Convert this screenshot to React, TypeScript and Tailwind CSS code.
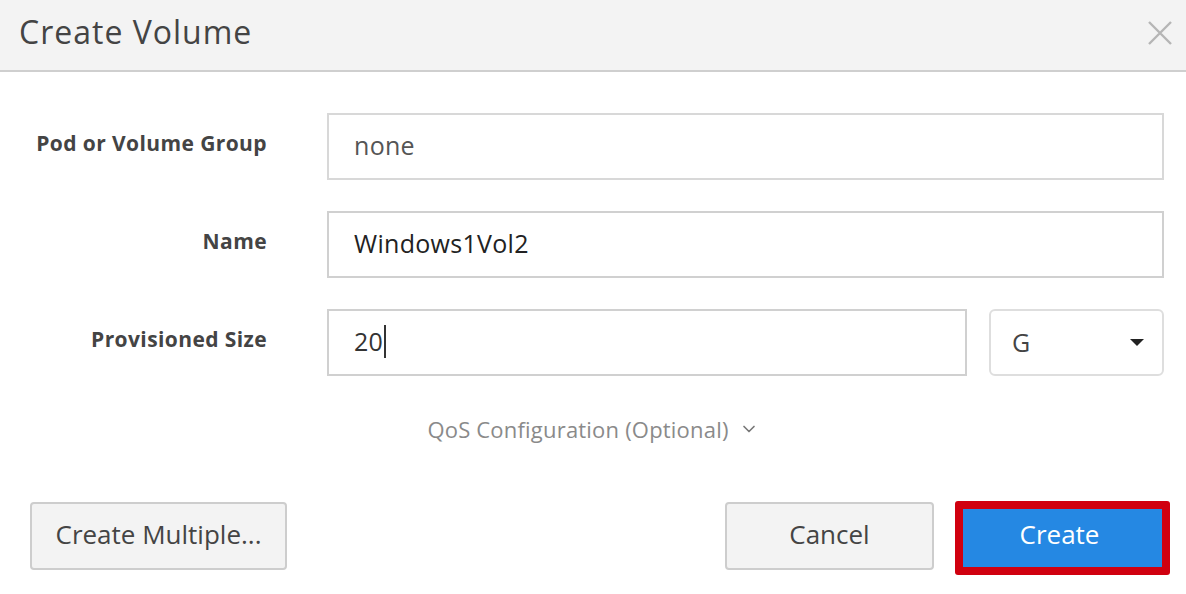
import { ChevronDown } from "lucide-react";

const font = { fontFamily: "'Open Sans', Lato, sans-serif" };

function Field({ label, children }: { label: string; children: React.ReactNode }) {
  return (
    <div className="flex items-center">
      <div className="w-[267px] shrink-0 pb-[6px] text-right text-[21px] leading-none font-bold tracking-[0.4px] text-[#444]">
        {label}
      </div>
      <div className="ml-[60px] flex flex-1 gap-[22px]">{children}</div>
    </div>
  );
}

export default function App() {
  return (
    <div className="flex h-[594px] w-[1186px] flex-col bg-white" style={font}>
      {/* Header */}
      <div className="flex h-[72px] shrink-0 items-center justify-between border-b-2 border-[#cfcfcf] bg-[#f3f3f3] pl-[19px] pr-[13px]">
        <h1 className="mb-[6px] text-[32px] leading-none tracking-[1px] text-[#444]">Create Volume</h1>
        <svg width="26" height="26" viewBox="0 0 26 26" className="mb-[4px]">
          <path d="M2 2 L24 24 M24 2 L2 24" stroke="#b5b5b5" strokeWidth="2.4" />
        </svg>
      </div>

      {/* Body */}
      <div className="flex flex-col gap-[31px] pr-[22px] pt-[41px]">
        <Field label="Pod or Volume Group">
          <div className="flex h-[67px] flex-1 items-center border-2 border-[#d8d8d8] pb-[2px] pl-[25px] text-[25px] tracking-[0.3px] text-[#555]">
            none
          </div>
        </Field>
        <Field label="Name">
          <div className="flex h-[67px] flex-1 items-center border-2 border-[#d0d0d0] pb-[2px] pl-[25px] text-[25px] tracking-[0.3px] text-[#222]">
            Windows1Vol2
          </div>
        </Field>
        <Field label="Provisioned Size">
          <div className="flex h-[67px] flex-1 items-center border-2 border-[#d0d0d0] pb-[2px] pl-[25px] text-[25px] tracking-[0.3px] text-[#333]">
            20
            <span className="ml-[1px] h-[33px] w-[2px] bg-[#333]" />
          </div>
          <div className="flex h-[67px] w-[175px] shrink-0 items-center justify-between rounded-[6px] border-2 border-[#dedede] pl-[21px] pr-[18px] text-[25px] text-[#444]">
            G
            <svg width="14" height="8" viewBox="0 0 14 8">
              <path d="M0 0 L14 0 L7 7 Z" fill="#222" />
            </svg>
          </div>
        </Field>
      </div>

      <div className="mt-[42px] flex items-center justify-center gap-[10px] text-[22px] leading-none tracking-[0.2px] text-[#8a8a8a]">
        QoS Configuration (Optional)
        <ChevronDown size={20} strokeWidth={2} className="text-[#777]" />
      </div>

      {/* Footer */}
      <div className="mt-[61px] flex items-start justify-between pl-[30px] pr-[16px]">
        <button className="mt-[1px] h-[68px] w-[257px] rounded-[4px] border-2 border-[#cdcdcd] bg-[#f3f3f3] pb-[4px] text-[26px] text-[#444]">
          Create Multiple...
        </button>
        <div className="flex items-start gap-[21px]">
          <button className="mt-[1px] h-[68px] w-[209px] rounded-[4px] border-2 border-[#cdcdcd] bg-[#f3f3f3] pb-[4px] text-[26px] text-[#444]">
            Cancel
          </button>
          <div className="rounded-[3px] bg-[#d0000f] p-[8px]">
            <button className="h-[58px] w-[199px] bg-[#2588e3] pb-[8px] pr-[6px] text-[26px] text-white">
              Create
            </button>
          </div>
        </div>
      </div>
    </div>
  );
}
